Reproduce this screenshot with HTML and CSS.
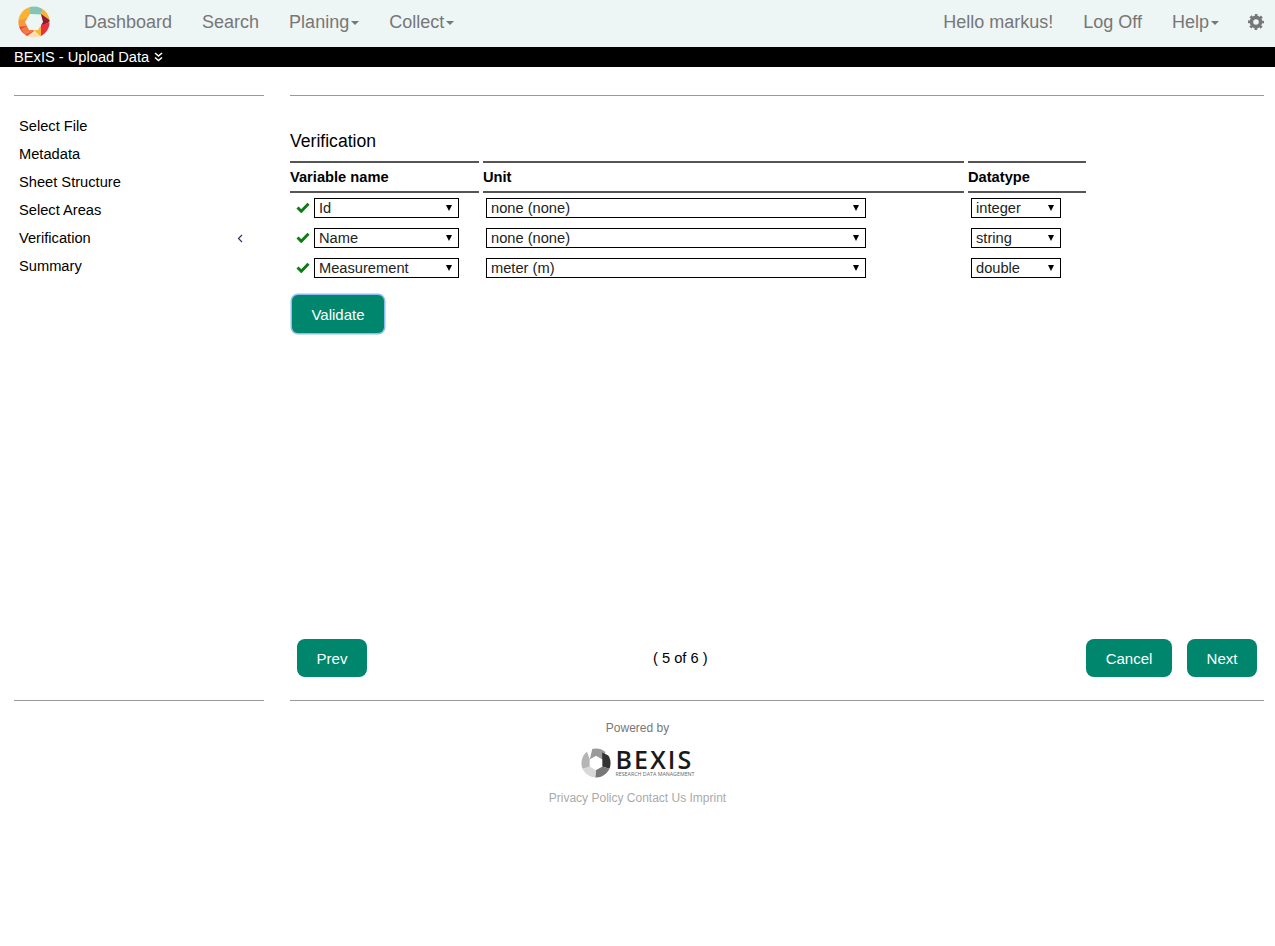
FILE: index.html
```html
<!DOCTYPE html>
<html lang="en">
<head>
<meta charset="utf-8">
<title>BExIS - Upload Data</title>
<link rel="stylesheet" href="styles.css">
</head>
<body>
<header class="navbar">
  <svg class="brand" width="34" height="34" viewBox="0 0 34 34" aria-hidden="true">
    <defs>
      <mask id="ring"><rect width="34" height="34" fill="#000"/><circle cx="17" cy="17" r="15.6" fill="#fff"/><polygon points="13,9 24,9.500 26,17 21,25 12,25 8,17" fill="#000"/></mask>
    </defs>
    <g mask="url(#ring)">
      <polygon points="13,0 26,0 24,13 13,9" fill="#86c5b1"/>
      <polygon points="26,0 34,4 34,17 24,13" fill="#f9b233"/>
      <polygon points="24,9 34,16 24,22" fill="#8f1d30"/>
      <polygon points="34,17 34,34 22,34 24,20" fill="#e5333c"/>
      <polygon points="24,21 24,34 14,34 17,25" fill="#fbb534"/>
      <polygon points="6,34 26,34 17,25 11,28" fill="#fde0b4"/>
      <polygon points="0,19 10,21 17,26 6,34 0,30" fill="#e8434b"/>
      <polygon points="10,21 17,26 8,30 4,24" fill="#f47a3c"/>
      <polygon points="13,0 13,9 10,17 0,17 0,6" fill="#fbb234"/>
      <polygon points="0,16 10,13 10,21 0,22" fill="#f59a34"/>
    </g>
  </svg>
  <nav class="nav">
    <a class="nav-link" href="#">Dashboard</a>
    <a class="nav-link" href="#">Search</a>
    <a class="nav-link" href="#">Planing<span class="caret"></span></a>
    <a class="nav-link" href="#">Collect<span class="caret"></span></a>
  </nav>
  <nav class="nav nav-right">
    <a class="nav-link" href="#">Hello markus!</a>
    <a class="nav-link" href="#">Log Off</a>
    <a class="nav-link" href="#">Help<span class="caret"></span></a>
    <a class="nav-gear" href="#" aria-label="Settings">
      <svg width="16" height="16" viewBox="0 0 16 16" aria-hidden="true">
        <circle cx="8" cy="8" r="4.600" fill="none" stroke="#777" stroke-width="3.600"/>
        <circle cx="8" cy="8" r="6.900" fill="none" stroke="#777" stroke-width="2.200" stroke-dasharray="2.710 2.710" stroke-dashoffset="1.350"/>
      </svg>
    </a>
  </nav>
</header>
<div class="titlebar">
  <span>BExIS - Upload Data</span>
  <svg class="titlebar-icon" width="9" height="10" viewBox="0 0 9 10" aria-hidden="true">
    <path d="M1 1l3.500 3L8 1M1 5.500l3.500 3 3.500-3" fill="none" stroke="#fff" stroke-width="1.600"/>
  </svg>
</div>
<main class="layout">
  <aside class="panel">
    <ul class="steps">
      <li class="step">Select File</li>
      <li class="step">Metadata</li>
      <li class="step">Sheet Structure</li>
      <li class="step">Select Areas</li>
      <li class="step">Verification
        <svg width="6" height="9" viewBox="0 0 6 9" aria-hidden="true"><path d="M5 1L1.500 4.500 5 8" fill="none" stroke="#2a3a60" stroke-width="1.200"/></svg>
      </li>
      <li class="step">Summary</li>
    </ul>
  </aside>
  <section class="panel panel-main">
    <h2 class="heading">Verification</h2>
    <div class="table">
      <div class="th">Variable name</div>
      <div class="th">Unit</div>
      <div class="th">Datatype</div>

      <div class="cell cell-name">
        <svg class="check" width="14" height="11" viewBox="0 0 14 11" aria-hidden="true"><path d="M1.500 5.500l3.800 3.700 7.200-7.400" fill="none" stroke="#0c7d12" stroke-width="3"/></svg>
        <span class="select select-name"><select><option>Id</option></select></span>
      </div>
      <div class="cell cell-unit"><span class="select select-unit"><select><option>none (none)</option></select></span></div>
      <div class="cell cell-type"><span class="select select-type"><select><option>integer</option></select></span></div>

      <div class="cell cell-name">
        <svg class="check" width="14" height="11" viewBox="0 0 14 11" aria-hidden="true"><path d="M1.500 5.500l3.800 3.700 7.200-7.400" fill="none" stroke="#0c7d12" stroke-width="3"/></svg>
        <span class="select select-name"><select><option>Name</option></select></span>
      </div>
      <div class="cell cell-unit"><span class="select select-unit"><select><option>none (none)</option></select></span></div>
      <div class="cell cell-type"><span class="select select-type"><select><option>string</option></select></span></div>

      <div class="cell cell-name">
        <svg class="check" width="14" height="11" viewBox="0 0 14 11" aria-hidden="true"><path d="M1.500 5.500l3.800 3.700 7.200-7.400" fill="none" stroke="#0c7d12" stroke-width="3"/></svg>
        <span class="select select-name"><select><option>Measurement</option></select></span>
      </div>
      <div class="cell cell-unit"><span class="select select-unit"><select><option>meter (m)</option></select></span></div>
      <div class="cell cell-type"><span class="select select-type"><select><option>double</option></select></span></div>
    </div>
    <button class="btn btn-validate" type="button">Validate</button>
    <div class="pager">
      <button class="btn btn-prev" type="button">Prev</button>
      <span class="pager-count">( 5 of 6 )</span>
      <button class="btn btn-cancel" type="button">Cancel</button>
      <button class="btn btn-next" type="button">Next</button>
    </div>
  </section>
</main>
<footer class="footer">
  <div class="powered">Powered by</div>
  <div class="footer-logo">
    <svg width="30" height="30" viewBox="0 0 34 34" aria-hidden="true">
      <defs>
        <mask id="ring2"><rect width="34" height="34" fill="#000"/><circle cx="17" cy="17" r="16.500" fill="#fff"/><polygon points="17,9 24,13 24,21 17,25 10,21 10,13" fill="#000"/></mask>
      </defs>
      <g mask="url(#ring2)">
        <polygon points="13,0 30,0 24,13 17,9 10,13" fill="#9a9a9a"/>
        <polygon points="24,5 34,10 34,24 24,21" fill="#333"/>
        <polygon points="34,24 24,21 17,25 16,34 30,34" fill="#777"/>
        <polygon points="17,25 16,34 2,30 0,24 10,21" fill="#d8d8d8"/>
        <polygon points="0,24 10,21 10,13 6,2 0,8" fill="#b5b5b5"/>
      </g>
    </svg>
    <div class="footer-brand">
      <div class="brand-name">BEXIS</div>
      <div class="brand-sub">RESEARCH DATA MANAGEMENT</div>
    </div>
  </div>
  <div class="footer-links">
    <a href="#">Privacy Policy</a>
    <a href="#">Contact Us</a>
    <a href="#">Imprint</a>
  </div>
</footer>
</body>
</html>
```
FILE: styles.css
```css
* { box-sizing: border-box; }

html, body { margin: 0; padding: 0; }

body {
  font-family: "Liberation Sans", Arial, sans-serif;
  font-size: 14.67px;
  color: #000;
  background: #fff;
  height: 946px;
  overflow: hidden;
}

/* Navbar */
.navbar {
  display: flex;
  align-items: center;
  height: 47px;
  padding: 0 11px 2px 17px;
  background: #edf5f5;
}

.brand { flex: none; margin: 0 18px 2px 0; }

.nav { display: flex; align-items: center; }
.nav-right { margin-left: auto; }

.nav-link {
  padding: 0 15px;
  font-size: 18px;
  line-height: 45px;
  color: #777;
  text-decoration: none;
  white-space: nowrap;
}

.caret {
  display: inline-block;
  margin-left: 2px;
  vertical-align: middle;
  border-top: 4px solid #777;
  border-left: 4px solid transparent;
  border-right: 4px solid transparent;
}

.nav-gear { display: flex; margin: 0 0 2px 14px; }

/* Title bar */
.titlebar {
  display: flex;
  align-items: center;
  gap: 5px;
  height: 20px;
  padding-left: 14px;
  background: #000;
  color: #fff;
}

/* Layout */
.layout {
  display: grid;
  grid-template-columns: 250px 974px;
  column-gap: 26px;
  padding: 28px 0 0 14px;
}

.panel {
  height: 606px;
  border-top: 1px solid #999;
  border-bottom: 1px solid #999;
}

.panel-main { display: flex; flex-direction: column; }

/* Steps */
.steps { list-style: none; margin: 16px 0 0; padding: 0; }

.step {
  display: flex;
  align-items: center;
  justify-content: space-between;
  height: 28px;
  padding: 0 21px 0 5px;
  color: #000;
}

/* Table */
.heading {
  margin: 35px 0 0;
  font-size: 17.6px;
  font-weight: 400;
  line-height: 20px;
  color: #000;
}

.table {
  display: grid;
  grid-template-columns: 189px 481px 118px;
  column-gap: 4px;
  grid-auto-rows: 30px;
  margin-top: 10px;
}

.th {
  grid-row: 1;
  display: flex;
  align-items: center;
  height: 32px;
  border-top: 2px solid #555;
  border-bottom: 2px solid #555;
  font-weight: 700;
}

.cell {
  display: flex;
  align-items: center;
  height: 30px;
  margin-top: 2px;
}

.cell-name { padding-left: 6px; gap: 4px; }
.cell-unit { padding-left: 3px; }
.cell-type { padding-left: 3px; }

.check { flex: none; margin-bottom: 2px; }

.select {
  position: relative;
  display: block;
  height: 20px;
}

.select::after {
  content: "";
  position: absolute;
  right: 7px;
  top: 7px;
  border-top: 6px solid #000;
  border-left: 3px solid transparent;
  border-right: 3px solid transparent;
  pointer-events: none;
}

.select select {
  appearance: none;
  display: block;
  width: 100%;
  height: 20px;
  margin: 0;
  padding: 0 0 0 4px;
  border: 1px solid #000;
  border-radius: 0;
  background: #fff;
  color: #222;
  font-family: "Liberation Sans", Arial, sans-serif;
  font-size: 14.67px;
  line-height: 18px;
}

.select-name { width: 145px; }
.select-unit { width: 380px; }
.select-type { width: 90px; }

/* Buttons */
.btn {
  height: 38px;
  padding: 0;
  border: 0;
  border-radius: 8px;
  background: #00866c;
  color: #fff;
  font-family: "Liberation Sans", Arial, sans-serif;
  font-size: 15px;
}

.btn-validate {
  align-self: flex-start;
  width: 92px;
  margin: 14px 0 0 2px;
  border-radius: 6px;
  box-shadow: 0 0 0 1.5px #8fbcf5;
}

.pager {
  display: flex;
  align-items: center;
  margin-top: auto;
  margin-bottom: 23px;
  padding: 0 7px;
}

.btn-prev { width: 70px; }

.pager-count {
  margin-left: 286px;
  margin-right: auto;
  color: #000;
}

.btn-cancel { width: 86px; margin-right: 15px; }
.btn-next { width: 70px; }

/* Footer */
.footer {
  display: flex;
  flex-direction: column;
  align-items: center;
  font-size: 12px;
}

.powered {
  margin-top: 20px;
  line-height: 14px;
  color: #777;
}

.footer-logo {
  display: flex;
  align-items: center;
  gap: 5px;
  height: 30px;
  margin-top: 13px;
}

.footer-brand { display: flex; flex-direction: column; gap: 4px; }

.brand-name {
  font-family: "Open Sans", sans-serif;
  font-size: 25px;
  font-weight: 600;
  line-height: 18px;
  letter-spacing: 2.1px;
  color: #1a1a1a;
}

.brand-sub {
  font-family: "Open Sans", sans-serif;
  font-size: 5.3px;
  line-height: 5px;
  color: #666;
  white-space: nowrap;
}

.footer-links {
  margin-top: 12px;
  line-height: 16px;
  color: #aaa;
}

.footer-links a { color: #aaa; text-decoration: none; }
```
